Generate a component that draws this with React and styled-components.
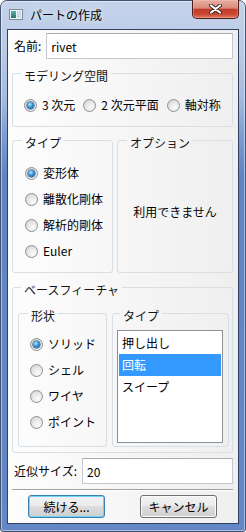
import styled, { createGlobalStyle, css } from 'styled-components'

/* PAGE */
const GlobalStyle = createGlobalStyle`
  * { box-sizing: border-box; }
  html, body { margin: 0; padding: 0; background: #ffffff; }
  body {
    font-family: "Noto Sans CJK JP", "Noto Sans", sans-serif;
    font-size: 12px;
    color: #000;
  }
`

/* WINDOW FRAME */
const Window = styled.div`
  width: 246px;
  height: 532px;
  display: flex;
  flex-direction: column;
  padding: 0 6px 7px;
  border: 1px solid #45546e;
  border-radius: 7px 7px 3px 3px;
  background: linear-gradient(180deg, #c4d3ea 0px, #bacbe6 45px, #a6bde0 95px, #7c9dd3 135px, #5f84c4 175px, #6488c7 100%);
  box-shadow: inset 0 0 0 1px rgba(255, 255, 255, 0.45);
`
const TitleBar = styled.div`
  flex: none;
  height: 28px;
  display: flex;
  align-items: center;
  padding-bottom: 1px;
`
const AppIcon = styled.svg`
  flex: none;
  margin: 0 7px 0 2px;
`
const Title = styled.span`
  line-height: 16px;
  text-shadow: 0 0 6px rgba(255, 255, 255, 0.9);
`
const CloseButton = styled.div`
  margin-left: auto;
  align-self: flex-start;
  margin-top: -1px;
  width: 47px;
  height: 19px;
  display: flex;
  align-items: center;
  justify-content: center;
  border: 1px solid #4c1e19;
  border-top: none;
  border-radius: 0 0 5px 5px;
  background: linear-gradient(180deg, #e8b0a4 0%, #d98a7b 45%, #bf3d29 52%, #c9462f 78%, #e27a63 100%);
  box-shadow: inset 0 0 0 1px rgba(255, 200, 190, 0.35);
`

/* CLIENT AREA */
const Client = styled.div`
  flex: 1;
  display: flex;
  flex-direction: column;
  border: 1px solid #30425f;
  background: linear-gradient(90deg, #fdfdfd 0%, #efefef 100%);
  padding: 3px 5px 0 4px;
`
const FieldRow = styled.div`
  display: flex;
  align-items: center;
  gap: 5px;
  height: 26px;
  padding-left: 2px;
  margin-top: ${p => p.$mt || 0}px;
`
const FieldLabel = styled.span`
  line-height: 16px;
  white-space: nowrap;
`
const TextBox = styled.input`
  flex: 1;
  min-width: 0;
  height: 26px;
  padding: 0 4px;
  font: inherit;
  color: #000;
  background: #fff;
  border: 1px solid #c5c8cf;
  border-top-color: #abadb3;
  outline: none;
`

/* GROUP BOXES */
const Group = styled.fieldset`
  margin: ${p => p.$mt || 0}px 0 0;
  padding: ${p => p.$pad};
  border: 1px solid #d5dfe5;
  border-radius: 3px;
  min-width: 0;
  ${p => p.$column && css`
    display: flex;
    flex-direction: column;
  `}
`
const Legend = styled.legend`
  padding: 6px 3px 0;
  margin-left: ${p => p.$offset}px;
  line-height: 14px;
  color: #151515;
`
const TwoCols = styled.div`
  display: grid;
  grid-template-columns: ${p => p.$cols};
  gap: ${p => p.$gap}px;
  margin-top: ${p => p.$mt || 0}px;
`
const InlineRadios = styled.div`
  display: flex;
  align-items: center;
  gap: 8px;
  height: 16px;
`
const RadioItem = styled.label`
  display: flex;
  align-items: center;
  gap: 5px;
  height: ${p => p.$h || 16}px;
  line-height: 16px;
  white-space: nowrap;
`
const Radio = styled.span`
  position: relative;
  flex: none;
  width: 13px;
  height: 13px;
  border-radius: 50%;
  border: 1px solid #8d8f91;
  background: radial-gradient(circle at 65% 70%, #fbfbfb 0%, #e9e9e9 45%, #cdcdcd 100%);
  ${p => p.$checked && css`
    &::after {
      content: '';
      position: absolute;
      left: 2px;
      top: 2px;
      width: 7px;
      height: 7px;
      border-radius: 50%;
      background: radial-gradient(circle at 40% 35%, #b8ecff 0%, #3a9ad8 40%, #0f4d86 100%);
      box-shadow: 0 0 0 0.5px #163d63;
    }
  `}
`
const Unavailable = styled.div`
  flex: 1;
  display: flex;
  align-items: center;
  justify-content: center;
  line-height: 16px;
`

/* LIST BOX */
const ListBox = styled.div`
  flex: 1;
  border: 1px solid #8e9197;
  background: #fff;
  padding: 1px;
`
const ListItem = styled.div`
  height: 22px;
  line-height: 22px;
  padding-left: 3px;
  background: ${p => (p.$selected ? '#3399ff' : 'transparent')};
  color: ${p => (p.$selected ? '#fff' : '#000')};
`

/* FOOTER */
const Separator = styled.div`
  margin-top: 5px;
  height: 2px;
  border-top: 1px solid #a0a0a0;
  border-bottom: 1px solid #ffffff;
`
const ButtonRow = styled.div`
  display: flex;
  justify-content: space-between;
  padding: 0 16px;
  margin-top: 4px;
`
const Button = styled.button`
  width: 77px;
  height: 23px;
  padding: 0;
  font: inherit;
  color: #000;
  border: 1px solid ${p => (p.$primary ? '#3c7fb1' : '#707070')};
  border-radius: 3px;
  background: linear-gradient(180deg, #f2f2f2 0%, #ebebeb 50%, #dddddd 50%, #cfcfcf 100%);
  box-shadow: inset 0 0 0 1px ${p => (p.$primary ? '#70d4fa' : '#fbfbfb')};
`

const RadioOption = ({ label, checked, h }) => (
  <RadioItem $h={h}>
    <Radio $checked={checked} />
    {label}
  </RadioItem>
)

const App = () => {
  const spaces = ['3 次元', '2 次元平面', '軸対称']
  const types = ['変形体', '離散化剛体', '解析的剛体', 'Euler']
  const shapes = ['ソリッド', 'シェル', 'ワイヤ', 'ポイント']
  const features = ['押し出し', '回転', 'スイープ']

  return (
    <>
      <GlobalStyle />
      <Window>
        <TitleBar>
          <AppIcon width="14" height="11" viewBox="0 0 14 11">
            <defs>
              <linearGradient id="pane" x1="0" y1="0" x2="0" y2="1">
                <stop offset="0" stopColor="#5fb3a6" />
                <stop offset="1" stopColor="#2b7466" />
              </linearGradient>
            </defs>
            <rect x="0.5" y="0.5" width="13" height="10" fill="#eef3f8" stroke="#7d8b99" />
            <rect x="2" y="2" width="5" height="7" fill="url(#pane)" />
            <rect x="8" y="2" width="4" height="7" fill="#c9dcec" />
          </AppIcon>
          <Title>パートの作成</Title>
          <CloseButton>
            <svg width="13" height="10" viewBox="0 0 13 10">
              <path d="M2 1.5 L11 8.5 M11 1.5 L2 8.5" stroke="#3b2a28" strokeWidth="4" strokeLinecap="round" />
              <path d="M2 1.5 L11 8.5 M11 1.5 L2 8.5" stroke="#ffffff" strokeWidth="2.2" strokeLinecap="round" />
            </svg>
          </CloseButton>
        </TitleBar>

        <Client>
          <FieldRow>
            <FieldLabel>名前:</FieldLabel>
            <TextBox defaultValue="rivet" />
          </FieldRow>

          <Group $mt={4} $pad="14px 11px 13px">
            <Legend $offset={-3}>モデリング空間</Legend>
            <InlineRadios>
              {spaces.map((s, i) => (
                <RadioOption key={s} label={s} checked={i === 0} />
              ))}
            </InlineRadios>
          </Group>

          <TwoCols $cols="101px 1fr" $gap={4} $mt={3}>
            <Group $pad="10px 12px 8px">
              <Legend $offset={-3}>タイプ</Legend>
              {types.map((t, i) => (
                <RadioOption key={t} label={t} checked={i === 0} h={26} />
              ))}
            </Group>
            <Group $pad="10px 12px 8px" $column>
              <Legend $offset={-3}>オプション</Legend>
              <Unavailable>利用できません</Unavailable>
            </Group>
          </TwoCols>

          <Group $mt={4} $pad="6px 3px 5px 5px">
            <Legend $offset={3}>ベースフィーチャ</Legend>
            <TwoCols $cols="89px 1fr" $gap={5}>
              <Group $pad="8px 11px 11px">
                <Legend $offset={-2}>形状</Legend>
                {shapes.map((s, i) => (
                  <RadioOption key={s} label={s} checked={i === 0} h={26} />
                ))}
              </Group>
              <Group $pad="7px 5px 3px 4px" $column>
                <Legend $offset={3}>タイプ</Legend>
                <ListBox>
                  {features.map((f, i) => (
                    <ListItem key={f} $selected={i === 1}>{f}</ListItem>
                  ))}
                </ListBox>
              </Group>
            </TwoCols>
          </Group>

          <FieldRow $mt={5}>
            <FieldLabel>近似サイズ:</FieldLabel>
            <TextBox defaultValue="20" />
          </FieldRow>

          <Separator />
          <ButtonRow>
            <Button $primary>続ける...</Button>
            <Button>キャンセル</Button>
          </ButtonRow>
        </Client>
      </Window>
    </>
  )
}

export default App
